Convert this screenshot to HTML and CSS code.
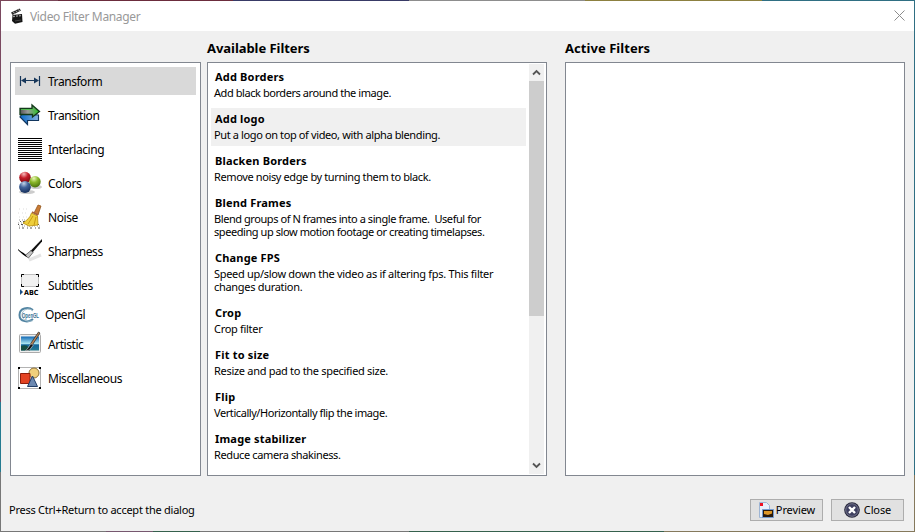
FILE: index.html
```html
<!DOCTYPE html>
<html lang="en">
<head>
<meta charset="utf-8">
<title>Video Filter Manager</title>
<link rel="stylesheet" href="styles.css">
</head>
<body>
<div class="desktop">
<div class="window">
  <header class="titlebar">
    <svg class="app-icon" width="14" height="16" viewBox="0 0 14 16"><path d="M1 4.500 9.500.5l1.500 2L2.500 7z" fill="#2a2a2a"/><path d="m3 4 2 1.500M5.500 2.700l2 1.500M8 1.500l2 1.500" stroke="#bbb" stroke-width=".8"/><path d="m2.500 7 9.500-1 .5 8-7.500 1.800L2 13z" fill="#151515"/><path d="m3 8.500 9-1" stroke="#999" stroke-width="1.300" stroke-dasharray="2 1"/><path d="m5 13 6-1" stroke="#444"/></svg>
    <span class="title">Video Filter Manager</span>
    <svg class="close-x" width="11" height="11" viewBox="0 0 11 11"><path d="m.5.5 10 10M10.500.5l-10 10" stroke="#8c8c8c" fill="none"/></svg>
  </header>
  <main class="content">
    <nav class="list categories">
      <div class="category selected"><span class="icon"><svg width="24" height="24" viewBox="0 0 24 24"><path d="M2.500 7v10M21.500 7v10M4 11.500h16" stroke="#17375a" stroke-width="1.200"/><path d="m3 11.500 5-3v6zM21 11.500l-5-3v6z" fill="#17375a"/></svg></span><span>Transform</span></div>
      <div class="category"><span class="icon"><svg width="24" height="24" viewBox="0 0 24 24"><defs><linearGradient id="green"><stop stop-color="#555"/><stop offset=".4" stop-color="#999"/><stop offset="1" stop-color="#22c51d"/></linearGradient><linearGradient id="blue"><stop stop-color="#0869c8"/><stop offset="1" stop-color="#8ab4e0"/></linearGradient></defs><path d="M20.500 12v5.500h-11v4L2 14l2-3z" fill="url(#blue)" stroke="#12365e" stroke-width="1.200"/><path d="M2 5.500h12V2l7.500 6.500L14.500 14v-2.500H2z" fill="url(#green)" stroke="#123819" stroke-width="1.300"/><path d="M3 6.500h12" stroke="#4fd04b" stroke-width=".8"/></svg></span><span>Transition</span></div>
      <div class="category"><span class="icon"><svg width="24" height="24" viewBox="0 0 24 24"><path d="M0 1.500h24m-24 2h24m-24 2h24m-24 2h24m-24 2h24m-24 2h24m-24 2h24m-24 2h24m-24 2h24m-24 2h24m-24 2h24m-24 2h24" stroke="#000" shape-rendering="crispEdges"/></svg></span><span>Interlacing</span></div>
      <div class="category"><span class="icon"><svg width="24" height="24" viewBox="0 0 24 24"><defs><radialGradient id="red" cx=".4" cy=".2" r=".8"><stop stop-color="#f6baba"/><stop offset=".45" stop-color="#c41c28"/><stop offset="1" stop-color="#7b0710"/></radialGradient><radialGradient id="lime" cx=".4" cy=".2" r=".8"><stop stop-color="#eaf6b5"/><stop offset=".45" stop-color="#8ab82a"/><stop offset="1" stop-color="#4a720c"/></radialGradient><radialGradient id="navy" cx=".4" cy=".2" r=".8"><stop stop-color="#c3d3e8"/><stop offset=".45" stop-color="#41639a"/><stop offset="1" stop-color="#17305d"/></radialGradient></defs><ellipse cx="9" cy="21" rx="8" ry="2" fill="#ccc"/><ellipse cx="18" cy="16" rx="6" ry="2" fill="#ccc"/><circle cx="7" cy="6.500" r="5.800" fill="url(#red)"/><circle cx="17" cy="10.800" r="5.700" fill="url(#lime)"/><circle cx="7" cy="16" r="5.900" fill="url(#navy)"/></svg></span><span>Colors</span></div>
      <div class="category"><span class="icon"><svg width="24" height="24" viewBox="0 0 24 24"><path d="M1 4h9M0 8h10M1 12h9" stroke="#ddd" stroke-dasharray="1 3 1 2"/><path d="M1 15h11M0 18h20M1 21h22" stroke="#999" stroke-dasharray="1 2 1 1"/><path d="M2 16.500h16M0 19.500h21M1 23h22" stroke="#555" stroke-dasharray="1 2 2 3"/><path d="m20 0 3 1-3 9-4-2z" fill="#c97b35" stroke="#8b4d13" stroke-width=".7"/><path d="m13.500 8 6 3 .5 9-9 1-6-3c4-3 7-5 8.500-10z" fill="#edce3c" stroke="#b98e0c" stroke-width=".8"/><path d="m15 11-5 8m8-7-2 8" stroke="#c89a13"/><path d="m14 7 6 3" stroke="#a8643c" stroke-width="1.500"/></svg></span><span>Noise</span></div>
      <div class="category"><span class="icon"><svg width="24" height="24" viewBox="0 0 24 24"><path d="m11 21 12-5" stroke="#e4e4e4" stroke-width="3"/><path d="M24 0v2.500L14 14l-2-1.500z" fill="#111"/><path d="m13 11.500 2 2-4.500 5.500L7 16.500z" fill="#c4c4c4" stroke="#444" stroke-width=".7"/><path d="M0 10c3 3 5 3 7.500 5.500L9 18c-3-1-6-4-9-7z" fill="#000"/></svg></span><span>Sharpness</span></div>
      <div class="category"><span class="icon"><svg width="24" height="24" viewBox="0 0 24 24"><rect x="3.500" y="1.500" width="17" height="12" fill="#f1f1f1" stroke="#888" stroke-dasharray="1 1"/><path d="M3.500 4V1.500H6m12 0h2.500V4m-17 7v2.500H6m12 0h2.500V11" stroke="#000" fill="none"/><path d="m2 16 3 3-3 3z" fill="#184e85"/><text x="6" y="22" class="abc" textLength="14.500" lengthAdjust="spacingAndGlyphs">ABC</text></svg></span><span>Subtitles</span></div>
      <div class="category opengl"><span class="icon"><svg width="22" height="16" viewBox="0 0 22 16"><path d="M15 3C10-.5 1.500 1 1.500 8s9 8 13.500 4" fill="none" stroke="#5284a2" stroke-width="2"/><path d="M15 13.500c-4 2-11 0-11-5.500s7-8 11-4" fill="none" stroke="#a1bfce"/><text x="4" y="10.500" class="gl" textLength="17" lengthAdjust="spacingAndGlyphs">OpenGL</text></svg></span><span>OpenGl</span></div>
      <div class="category"><span class="icon"><svg width="24" height="24" viewBox="0 0 24 24"><defs><linearGradient id="sea" x2="0" y2="1"><stop stop-color="#1269b5"/><stop offset=".5" stop-color="#a9e3ef"/><stop offset=".6" stop-color="#11649b"/><stop offset="1" stop-color="#247c90"/></linearGradient></defs><rect x="1.500" y="2.500" width="21" height="18" rx="1" fill="#eee" stroke="#aaa"/><path d="M3 4.500h18v14H3z" fill="url(#sea)"/><path d="M3 14c5-2 8 0 9 4.500H3z" fill="#164d42"/><path d="m20.500 0 1.500 1-8 12.500-2-1z" fill="#b88355" stroke="#222" stroke-width=".7"/><path d="m13 11.500 2 2-3.500 4.500-4 1 2.500-3z" fill="#111" stroke="#ddd" stroke-width=".6"/></svg></span><span>Artistic</span></div>
      <div class="category"><span class="icon"><svg width="24" height="24" viewBox="0 0 24 24"><rect x=".5" y="1.500" width="22" height="21" fill="none" stroke="#666" stroke-dasharray="1 1"/><path d="M0 1h2v2H0zM21 1h2v2h-2zM0 21h2v2H0zM21 21h2v2h-2z"/><circle cx="16" cy="7" r="5" fill="#f0cf7c" stroke="#8c7036"/><path d="M2.500 7.500h9.500v10H2.500z" fill="#e34322" stroke="#8e1d0a"/><path d="m14.500 10 5 10.500h-10z" fill="#6d89b1" stroke="#233f69"/></svg></span><span>Miscellaneous</span></div>
    </nav>
    <section class="available">
      <h2>Available Filters</h2>
      <div class="list filter-list">
        <div class="filters">
          <article><h3>Add Borders</h3><p class="tight">Add black borders around the image.</p></article>
          <article class="current"><h3>Add logo</h3><p>Put a logo on top of video, with alpha blending.</p></article>
          <article><h3>Blacken Borders</h3><p>Remove noisy edge by turning them to black.</p></article>
          <article><h3>Blend Frames</h3><p class="tight">Blend groups of N frames into a single frame.&nbsp; Useful for<br>speeding up slow motion footage or creating timelapses.</p></article>
          <article><h3>Change FPS</h3><p class="loose">Speed up/slow down the video as if altering fps. This filter<br>changes duration.</p></article>
          <article><h3>Crop</h3><p class="loose">Crop filter</p></article>
          <article><h3>Fit to size</h3><p class="loose">Resize and pad to the specified size.</p></article>
          <article><h3>Flip</h3><p class="tight">Vertically/Horizontally flip the image.</p></article>
          <article><h3>Image stabilizer</h3><p>Reduce camera shakiness.</p></article>
        </div>
        <div class="scrollbar">
          <span class="arrow"><svg width="9" height="7" viewBox="0 0 9 7"><path d="m1 5.500 3.500-3.500L8 5.500" fill="none" stroke="#555" stroke-width="1.800"/></svg></span>
          <span class="thumb"></span>
          <span class="arrow last"><svg width="9" height="7" viewBox="0 0 9 7"><path d="m1 1.500 3.500 3.500L8 1.500" fill="none" stroke="#555" stroke-width="1.800"/></svg></span>
        </div>
      </div>
    </section>
    <section class="active">
      <h2>Active Filters</h2>
      <div class="list"></div>
    </section>
  </main>
  <footer class="footer">
    <span class="hint">Press Ctrl+Return to accept the dialog</span>
    <button class="preview"><svg width="16" height="16" viewBox="0 0 16 16"><path d="M1.500.5h7l3 3v12h-10z" fill="#e8f0fa" stroke="#9eb5d4"/><path d="M2 1h3v3H2z" fill="#e12"/><path d="M4.500 7.500h11v8h-11z" fill="#28190d" stroke="#739bd0"/><path d="M6 9h8v2.500L10 13l-4-1z" fill="#df9827"/></svg><span>Preview</span></button>
    <button class="close"><svg width="16" height="16" viewBox="0 0 16 16"><circle cx="8" cy="8" r="7.800" fill="#28283c"/><circle cx="8" cy="8" r="6.300" fill="#3f4060" stroke="#8587a0" stroke-width=".8"/><path d="m5 5 6 6m0-6-6 6" stroke="#fff" stroke-width="2.400"/></svg><span>Close</span></button>
  </footer>
</div>
</div>
</body>
</html>
```
FILE: styles.css
```css
* { box-sizing: border-box; }
body { margin: 0; color: #000; font-family: "Noto Sans", sans-serif; }
svg { display: block; flex: none; overflow: visible; }
.desktop {
  width: 915px; height: 532px; padding: 1px;
  background:
    linear-gradient(90deg, #7a4658 0 58px, #6b2c3c 58px 233px, #383a66 233px 409px, #8d8d8d 409px 585px, #8c8040 585px 762px, #2f6f83 762px) top / 100% 1px no-repeat,
    linear-gradient(90deg, #777 0 106px, #76586f 106px 153px, #35604d 153px 200px, #777 200px 409px, #35604d 409px 664px, #85795c 664px) bottom / 100% 1px no-repeat,
    linear-gradient(#7a4960 0 402px, #257b91 402px 472px, #777 472px) left / 1px 100% no-repeat,
    linear-gradient(#2f6f83 0 475px, #85795c 475px) right / 1px 100% no-repeat;
}
.window { width: 913px; height: 530px; background: #f0f0f0; display: flex; flex-direction: column; }
.titlebar { height: 30px; background: #fff; display: flex; align-items: center; padding: 0 9px; }
.title { margin-left: 6px; font-size: 12px; letter-spacing: -.35px; color: #999; white-space: nowrap; }
.close-x { margin-left: auto; position: relative; top: -1px; }
.content { height: 445px; padding: 0 9px; display: flex; align-items: flex-end; }
.list { height: 414px; border: 1px solid #828790; background: #fff; }
.categories { width: 191px; padding: 4px; display: flex; flex-direction: column; gap: 6px; margin-right: 6px; }
.category { height: 28px; display: flex; align-items: center; gap: 6px; padding-left: 3px; font-size: 12px; letter-spacing: -.45px; }
.selected { background: #d9d9d9; }
.opengl { height: 19px; gap: 5px; }
.abc { font: bold 7px "DejaVu Sans", sans-serif; letter-spacing: 0; }
.gl { font: bold 7px "Liberation Sans", sans-serif; letter-spacing: 0; fill: #326e91; }
.available, .active { width: 340px; }
.active { margin-left: 18px; }
h2 { margin: 0; height: 27px; line-height: 27px; font-size: 13px; font-weight: 700; letter-spacing: -.05px; white-space: nowrap; }
.active h2 { letter-spacing: .05px; }
.filter-list { display: flex; padding: 1px 2px 1px 3px; }
.filters { width: 315px; padding-top: 2px; display: flex; flex-direction: column; gap: 4px; }
article { padding: 3px 0 5px 3px; white-space: nowrap; }
.current { background: #f0f0f0; }
h3 { margin: 0 0 1px 1px; font-size: 11px; line-height: 16px; font-weight: 700; letter-spacing: .18px; }
p { margin: 0; font-size: 11px; line-height: 13px; letter-spacing: -.38px; }
.tight { letter-spacing: -.43px; }
.loose { letter-spacing: -.3px; }
.scrollbar { width: 15px; margin-left: 3px; background: #f0f0f0; display: flex; flex-direction: column; }
.arrow { height: 17px; display: grid; place-items: center; }
.thumb { height: 235px; background: #cdcdcd; }
.last { margin-top: auto; }
.footer { height: 55px; display: flex; align-items: center; padding: 12px 10px 0 8px; font-size: 11px; }
.hint { margin-right: auto; letter-spacing: -.25px; }
button { width: 73px; height: 22px; padding: 0; margin: 0 0 0 8px; border: 1px solid #adadad; background: #e1e1e1; display: flex; align-items: center; justify-content: center; gap: 2px; font: 11px "Noto Sans", sans-serif; letter-spacing: -.1px; color: #000; }
.close { gap: 4px; }
```
